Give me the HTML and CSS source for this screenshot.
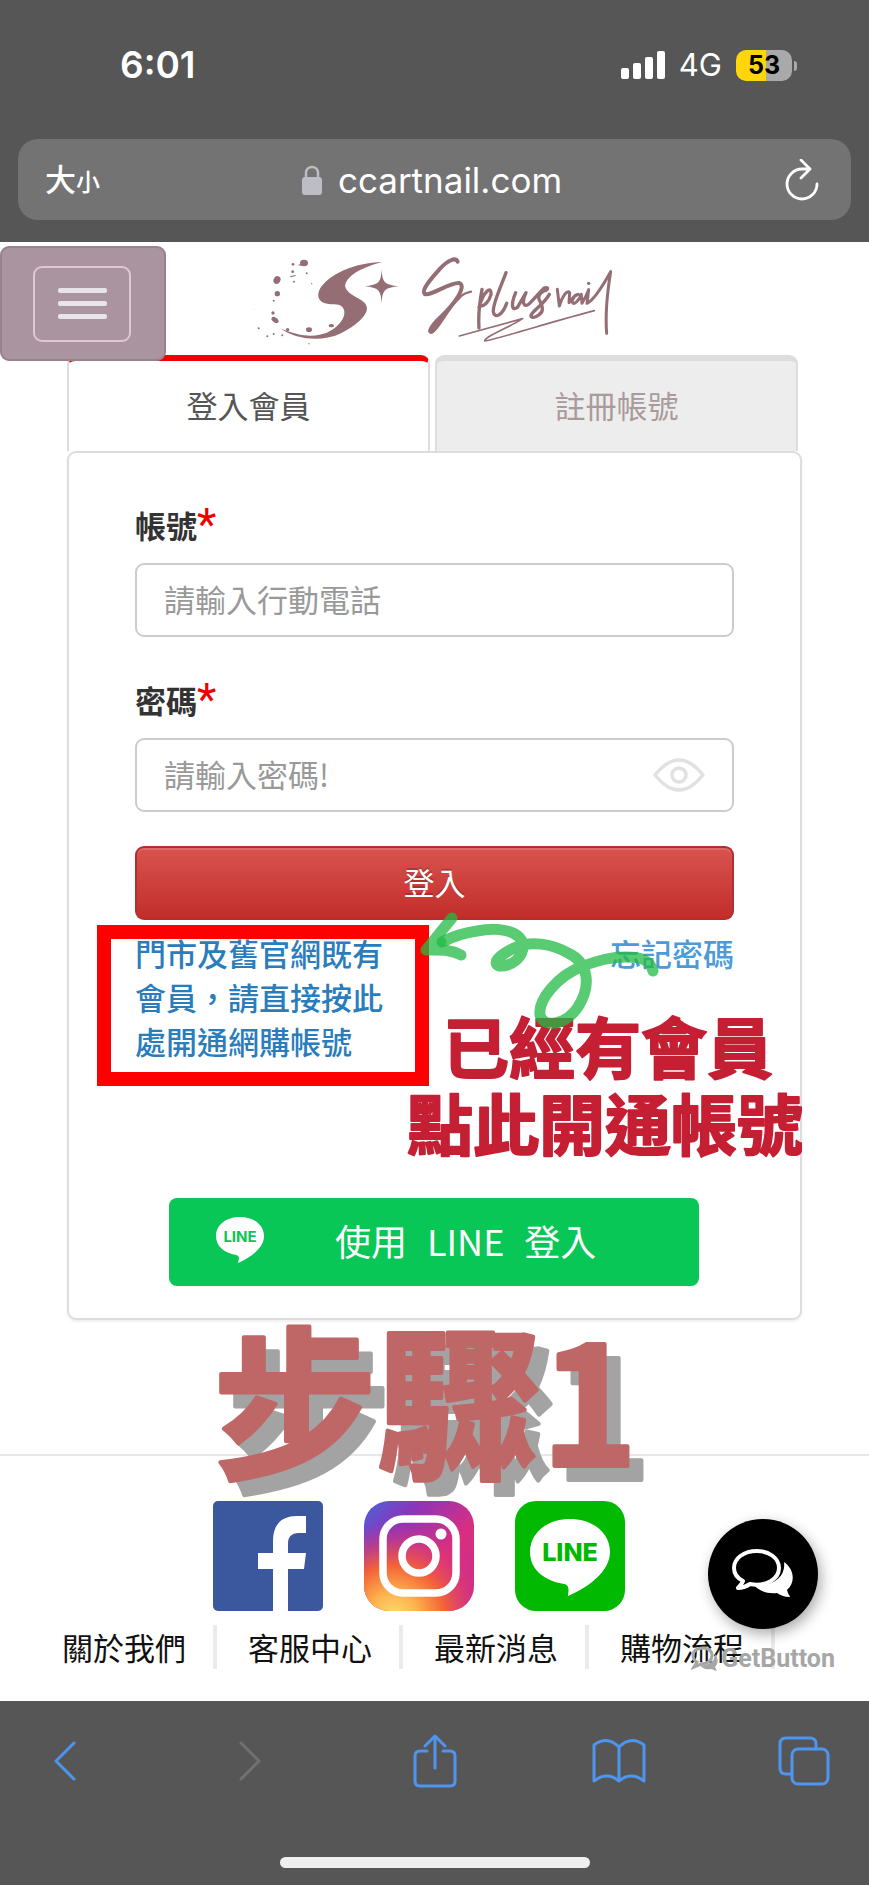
FILE: index.html
```html
<!DOCTYPE html>
<html lang="zh-Hant">
<head>
<meta charset="utf-8">
<meta name="viewport" content="width=device-width, initial-scale=1">
<title>S plus nail</title>
<link rel="stylesheet" href="styles.css">
</head>
<body>
<header class="browser-top">
  <div class="status">
    <span class="time">6:01</span>
    <div class="status-right">
      <svg class="signal" viewBox="0 0 44 28" aria-hidden="true"><g fill="#fff"><rect x="0" y="17" width="8" height="11" rx="2"/><rect x="12" y="12" width="8" height="16" rx="2"/><rect x="24" y="6" width="8" height="22" rx="2"/><rect x="36" y="0" width="8" height="28" rx="2"/></g></svg>
      <span class="network">4G</span>
      <span class="battery">53</span>
    </div>
  </div>
  <div class="address">
    <button class="text-size" type="button" aria-label="文字大小"><span class="big">大</span><span class="small">小</span></button>
    <div class="site">
      <svg class="lock" viewBox="0 0 20 30" aria-hidden="true"><rect y="12" width="20" height="18" rx="3" fill="#bdbdc5"/><path d="M4 13V8c0-8 12-8 12 0v5" fill="none" stroke="#bdbdc5" stroke-width="2.5"/></svg>
      <span>ccartnail.com</span>
    </div>
    <button class="reload-button" type="button" aria-label="重新載入">
      <svg class="reload" viewBox="0 0 34 42" fill="none" stroke="#fff" stroke-width="2.8" stroke-linecap="round" stroke-linejoin="round"><path d="M32 25a15 15 0 1 1-15-15h8M16 1l9 9-9 9"/></svg>
    </button>
  </div>
</header>

<main class="page">
  <button class="menu-button" type="button" aria-label="選單"><span class="menu-frame"><i></i><i></i><i></i></span></button>
  <div class="brand">
    <svg class="logo" viewBox="-18 6 1200 339" role="img" aria-label="S plus nail">
      <g fill="#956d75">
        <path d="M424 66C340 68 262 103 236 148C222 182 246 194 280 193C316 193 318 226 296 250C262 290 200 302 118 265C170 303 250 305 300 280C345 257 378 228 378 205C378 178 328 172 314 145C305 118 350 84 424 66Z"/>
        <path d="M422 88C424 127 430 135 474 139C430 143 424 151 422 192C420 151 414 143 370 139C414 135 420 127 422 88Z"/>
        <ellipse cx="189" cy="69" rx="12" ry="10"/><path d="M170 76l18-9v10z"/>
        <ellipse cx="108" cy="120" rx="10" ry="12" transform="rotate(30 108 120)"/>
        <circle cx="109" cy="161" r="8"/><ellipse cx="102" cy="240" rx="12" ry="7" transform="rotate(35 102 240)"/>
        <circle cx="96" cy="219" r="5"/><ellipse cx="204" cy="269" rx="9" ry="7"/><ellipse cx="271" cy="257" rx="8" ry="5"/>
        <circle cx="140" cy="269" r="5"/><circle cx="156" cy="73" r="4"/><circle cx="155" cy="95" r="4"/><circle cx="159" cy="125" r="3"/><circle cx="197" cy="100" r="3"/><circle cx="98" cy="182" r="3"/><circle cx="53" cy="265" r="3"/><circle cx="79" cy="289" r="3"/><circle cx="98" cy="282" r="3"/><circle cx="124" cy="286" r="3"/><circle cx="212" cy="131" r="2"/><circle cx="204" cy="311" r="2"/><circle cx="40" cy="207" r="1"/><path d="M148 108l16-3v3l-16 4z"/>
        <circle cx="1043" cy="130" r="5"/>
      </g>
      <g fill="none" stroke="#956d75" stroke-linecap="round" stroke-linejoin="round">
        <path stroke-width="12" d="M650 65C643 50 620 62 598 85C568 118 540 150 551 162C566 170 630 125 655 129C678 138 642 190 600 230C570 258 560 280 573 275C590 268 622 198 655 171"/>
        <path stroke-width="7" d="M655 171Q672 158 690 155"/>
        <path stroke-width="10" d="M723 148C715 190 712 235 714 264M714 202C728 152 752 136 750 163C744 188 728 198 720 198M795 98C780 140 755 190 757 215C760 236 782 230 797 190M824 158C808 196 814 216 830 201L855 158C840 190 850 206 866 190C880 176 893 160 908 145C918 140 924 145 916 150C904 152 890 164 894 178C904 195 911 215 893 225C880 236 864 233 872 222C885 205 910 190 925 163"/>
        <path stroke-width="9" d="M949 148L955 198C963 170 978 148 986 158L984 188C990 185 998 163 1012 163C994 168 988 192 1000 190C1012 185 1018 170 1021 163L1023 190C1032 175 1038 162 1043 149L1038 190C1060 180 1095 120 1109 95C1100 150 1092 220 1097 280"/>
        <path stroke-width="5" d="M655 288L845 236C800 265 730 290 731 303C760 300 950 240 1060 212"/>
      </g>
    </svg>
  </div>

  <section class="member">
    <div class="tabs" role="tablist">
      <button class="tab active" role="tab" aria-selected="true" type="button">登入會員</button>
      <button class="tab" role="tab" aria-selected="false" type="button">註冊帳號</button>
    </div>
    <form class="card">
      <div class="field">
        <label for="account">帳號<span class="required">*</span></label>
        <input id="account" type="text" placeholder="請輸入行動電話">
      </div>
      <div class="field">
        <label for="password">密碼<span class="required">*</span></label>
        <div class="password">
          <input id="password" type="password" placeholder="請輸入密碼!">
          <button class="eye" type="button" aria-label="顯示密碼"><svg viewBox="0 0 52 34" fill="none" stroke="#e1e1e1" stroke-width="3.4" stroke-linejoin="round"><path d="M2 17Q26-13 50 17Q26 47 2 17Z"/><circle cx="26" cy="17" r="7"/></svg></button>
        </div>
      </div>
      <button class="submit" type="submit">登入</button>
      <div class="links">
        <a class="activate" href="#activate">門市及舊官網既有會員，請直接按此處開通網購帳號</a>
        <a class="forgot" href="#forgot">忘記密碼</a>
      </div>
      <button class="line-login" type="button">
        <svg class="line-mark" viewBox="0 0 50 48" aria-hidden="true"><path fill="#fff" d="M25 1C11 1 1 9 1 20C1 30 9 37 21 39C25 40 24 42 23 47C36 41 49 32 49 20C49 9 39 1 25 1Z"/><text x="25" y="26" text-anchor="middle">LINE</text></svg>
        <span class="line-label"><span>使用</span><span>LINE</span><span>登入</span></span>
      </button>
      <svg class="notes" viewBox="67 451 735 869">
        <rect x="104" y="932" width="318" height="147" fill="none" stroke="#f00" stroke-width="14"/>
        <text class="note" x="443" y="1073">已經有會員</text>
        <text class="note" x="407" y="1150">點此開通帳號</text>
        <g fill="none" stroke="#22bb44" stroke-opacity=".75" stroke-width="11" stroke-linecap="round" stroke-linejoin="round">
          <path d="M653 971C650 960 641 957 626 957C611 957 600 960 583 966C557 976 538 1000 540 1015C543 1028 565 1026 578 1007C592 985 588 962 568 953C552 944 531 940 514 948C498 956 492 963 499 966C512 967 524 957 523 944C519 930 497 927 477 931C462 933 452 937 442 942"/>
          <path d="M452 918L426 950L441 942M426 950C440 950 450 949 461 955"/>
        </g>
      </svg>
    </form>
  </section>

  <footer class="footer">
    <svg class="step" viewBox="0 0 480 220"><text x="10" y="150">步驟1</text></svg>
    <div class="social">
      <a href="#facebook" aria-label="Facebook"><svg viewBox="0 0 110 110"><rect width="110" height="110" rx="5" fill="#3b579d"/><path fill="#fff" d="M60 110V68H45V52h15V40c0-17 9-25 24-25h9v17h-7c-8 0-11 4-11 11v9h18l-2 16H75v42z"/></svg></a>
      <a href="#instagram" aria-label="Instagram"><svg viewBox="0 0 110 110">
        <defs>
          <linearGradient id="ig-base" x1="0" y1="0" x2="1" y2="1"><stop offset="0" stop-color="#4767d8"/><stop offset=".25" stop-color="#8a35bd"/><stop offset=".6" stop-color="#d92e7f"/><stop offset="1" stop-color="#c62f91"/></linearGradient>
          <radialGradient id="ig-warm" cx=".27" cy="1.05" r=".85"><stop offset="0" stop-color="#ffdb73"/><stop offset=".25" stop-color="#fdb54e"/><stop offset=".55" stop-color="#f36238"/><stop offset="1" stop-color="#d92e7f" stop-opacity="0"/></radialGradient>
        </defs>
        <rect width="110" height="110" rx="25" fill="url(#ig-base)"/><rect width="110" height="110" rx="25" fill="url(#ig-warm)"/>
        <g fill="none" stroke="#fff" stroke-width="7.5"><rect x="19" y="18" width="73" height="74" rx="20"/><circle cx="55" cy="55" r="17"/></g><circle cx="77" cy="33" r="5.5" fill="#fff"/>
      </svg></a>
      <a href="#line" aria-label="LINE"><svg class="line-app" viewBox="0 0 110 110"><rect width="110" height="110" rx="21" fill="#00b900"/><path fill="#fff" d="M55 18C32 18 15 32 15 51C15 69 30 80 49 83C54 84 54 88 53 95C74 86 95 70 95 51C95 32 78 18 55 18Z"/><text x="55" y="60" text-anchor="middle">LINE</text></svg></a>
    </div>
    <nav class="site-nav">
      <a href="#about">關於我們</a><a href="#service">客服中心</a><a href="#news">最新消息</a><a href="#guide">購物流程</a>
    </nav>
    <div class="chat">
      <button class="chat-button" type="button" aria-label="聊天"><svg viewBox="0 0 62 50"><path fill="#fff" d="M52 13C62 20 64 33 55 41C56 45 58 47 58 48C52 48 48 46 45 44C35 45 27 42 22 36C42 38 54 27 52 13Z"/><path fill="#000" stroke="#fff" stroke-width="4" stroke-linejoin="round" d="M25 2C12 2 2 9 2 19C2 25 5 29 11 32C10 35 8 37 6 39C11 39 15 37 18 35C34 38 47 30 47 19C47 9 37 2 25 2Z"/></svg></button>
      <a class="credit" href="#getbutton"><svg viewBox="0 0 28 26"><path fill="#a6a6a6" d="M24 8C28 13 27 18 24 21L26 25L20 23C14 24 11 22 9 19C18 20 24 15 24 8Z"/><path fill="none" stroke="#a6a6a6" stroke-width="3" d="M12 2C6 2 2 5 2 9C2 13 4 15 6 16L3 21L10 18C17 18 21 14 21 9C21 5 17 2 12 2Z"/></svg>GetButton</a>
    </div>
  </footer>
</main>

<footer class="browser-bottom">
  <div class="toolbar">
    <button type="button" aria-label="上一頁"><svg width="24" height="42" viewBox="0 0 24 42"><path d="M21 3L3 21L21 39"/></svg></button>
    <button class="off" type="button" aria-label="下一頁" disabled><svg width="24" height="42" viewBox="0 0 24 42"><path d="M3 3L21 21L3 39"/></svg></button>
    <button type="button" aria-label="分享"><svg width="44" height="54" viewBox="0 0 44 54"><path d="M14 17H7Q2 17 2 22V47Q2 52 7 52H37Q42 52 42 47V22Q42 17 37 17H30M22 34V2M12 12L22 2L32 12"/></svg></button>
    <button type="button" aria-label="書籤"><svg width="54" height="46" viewBox="0 0 54 46"><path d="M27 9Q15-3 2 7V43Q15 33 27 43Q39 33 52 43V7Q39-3 27 9V43"/></svg></button>
    <button type="button" aria-label="分頁"><svg width="52" height="50" viewBox="0 0 52 50"><rect x="14" y="13" width="36" height="35" rx="6"/><path d="M14 38H8Q2 38 2 32V8Q2 2 8 2H32Q38 2 38 8V13"/></svg></button>
  </div>
  <div class="home-bar"></div>
</footer>
</body>
</html>
```
FILE: styles.css
```css
* { box-sizing: border-box; }

body {
  margin: 0;
  background: #fff;
  color: #111;
  font-family: "Noto Sans CJK TC", sans-serif;
  font-size: 31px;
  line-height: 44px;
}

button, input { font: inherit; }
button { margin: 0; padding: 0; border: 0; background: none; color: inherit; }
a { color: inherit; text-decoration: none; }
svg { display: block; }

/* Browser chrome */
.browser-top { padding: 44px 18px 22px; background: #565656; color: #fff; font-family: Inter, "Noto Sans CJK TC", sans-serif; }
.status { display: flex; align-items: center; justify-content: space-between; height: 42px; padding: 0 59px 0 102px; }
.time { font-size: 37px; font-weight: 600; }
.status-right { display: flex; align-items: center; gap: 14px; }
.signal { width: 44px; height: 28px; }
.network { font-size: 31px; }
.battery {
  position: relative;
  width: 56px;
  border-radius: 10px;
  background: linear-gradient(90deg, #ffd60a 53%, #a9a9a9 53%);
  color: #000;
  font-size: 25px;
  font-weight: 700;
  line-height: 31px;
  text-align: center;
}
.battery::after { content: ""; position: absolute; top: 11px; right: -5px; width: 3px; height: 10px; border-radius: 0 3px 3px 0; background: #a9a9a9; }
.address { display: grid; grid-template-columns: 1fr auto 1fr; align-items: center; height: 81px; margin-top: 53px; padding: 0 32px 0 27px; border-radius: 20px; background: #737373; }
.text-size { display: flex; align-items: baseline; font-family: "Noto Sans CJK TC", sans-serif; font-weight: 500; }
.text-size .small { font-size: 24px; }
.site { display: flex; align-items: center; gap: 16px; font-size: 35px; }
.lock { width: 20px; height: 30px; }
.reload-button { justify-self: end; }
.reload { width: 34px; height: 42px; }

.browser-bottom { padding: 29px 38px 18px; background: #565656; }
.toolbar { display: flex; align-items: center; justify-content: space-between; height: 62px; }
.toolbar button { display: grid; place-items: center; width: 54px; height: 62px; }
.toolbar svg { fill: none; stroke: #4e95f0; stroke-width: 3; stroke-linecap: round; stroke-linejoin: round; }
.toolbar .off svg { stroke: #717171; }
.home-bar { width: 310px; height: 11px; margin: 65px auto 0; border-radius: 6px; background: #efefef; }

/* Site header */
.page { position: relative; }
.menu-button { position: absolute; z-index: 2; top: 4px; left: 0; display: grid; place-items: center; width: 166px; height: 115px; padding-right: 2px; border: 2px solid #96838c; border-radius: 9px; background: #a9949f; }
.menu-frame { display: flex; flex-direction: column; align-items: center; justify-content: center; gap: 8px; width: 98px; height: 76px; border: 2px solid #e2c6d4; border-radius: 9px; }
.menu-frame i { width: 49px; height: 5px; border-radius: 2px; background: #e9e4e7; }
.brand { display: flex; justify-content: center; height: 113px; }
.logo { width: 400px; height: 113px; }

/* Login card */
.member { margin: 0 67px; }
.tabs { display: grid; grid-template-columns: 1fr 1fr; gap: 5px; padding-right: 4px; }
.tab { height: 96px; padding-bottom: 2px; border: 2px solid #ddd; border-top: 6px solid #ddd; border-bottom: 0; border-radius: 9px 9px 0 0; background: #ededed; color: #a99a9b; }
.tab.active { border-top-color: #f40000; background: #fff; color: #555; }
.card { position: relative; padding: 50px 66px 32px; border: 2px solid #ddd; border-radius: 9px; box-shadow: 0 2px 3px #0001; }
.field { margin-bottom: 41px; }
.field label { display: flex; height: 44px; margin-bottom: 16px; color: #333; font-weight: 700; }
.required { color: #f00000; font-family: Roboto, sans-serif; font-size: 45px; font-weight: 400; }
.field input { display: block; width: 100%; height: 74px; padding: 0 27px 4px; border: 2px solid #ccc; border-radius: 9px; background: #fff; }
.field input::placeholder { color: #999; opacity: 1; }
.password { position: relative; }
.eye { position: absolute; top: 20px; right: 29px; width: 52px; height: 34px; }
.submit { display: block; width: 100%; height: 74px; margin-top: -7px; padding-bottom: 2px; border: 2px solid #b22f2f; border-bottom-color: #b92c28; border-radius: 9px; background: linear-gradient(#d9534f, #c12e2a); box-shadow: inset 0 2px 0 #fff2; color: #fff; text-shadow: 0 -2px 0 #0003; }
.links { display: flex; align-items: flex-start; justify-content: space-between; margin-top: 11px; color: #2a7dbc; font-weight: 500; }
.activate { width: 248px; }
.forgot { color: #4c9bd8; }
.line-login { display: flex; align-items: center; width: calc(100% - 69px); height: 88px; margin: 135px auto 0 34px; padding: 0 0 4px 46px; border-radius: 8px; background: #08c756; color: #fff; font-size: 36px; }
.line-mark { width: 50px; height: 48px; }
.line-mark text { fill: #08c756; font: 700 15px Inter, sans-serif; }
.line-label { display: flex; gap: 20px; padding-left: 70px; }
.notes { position: absolute; top: -2px; left: -2px; width: calc(100% + 4px); pointer-events: none; }
.note { fill: #c51f34; stroke: #c51f34; stroke-width: 2px; stroke-linejoin: round; font-size: 66px; font-weight: 700; }

/* Site footer */
.footer { position: relative; margin-top: 134px; padding: 45px 0 32px; border-top: 2px solid #e8e8e8; }
.step { position: absolute; top: -140px; left: calc(50% - 232px); width: 480px; height: 220px; overflow: visible; pointer-events: none; }
.step text { fill: #be6766; stroke: #be6766; stroke-width: 4px; stroke-linejoin: round; font-size: 164px; font-weight: 700; filter: drop-shadow(14px 14px 0 #a3a3a3); }
.social { display: flex; justify-content: center; gap: 41px; padding-right: 31px; }
.social svg { width: 110px; height: 110px; }
.line-app text { fill: #00b900; font: 800 25px Inter, sans-serif; }
.site-nav { display: flex; margin: 14px 31px 0; overflow: hidden; }
.site-nav a { flex: none; padding: 0 27px 0 31px; border-right: 4px solid #ebebeb; }
.chat { position: absolute; top: 63px; right: 34px; display: flex; flex-direction: column; align-items: flex-end; }
.chat-button { display: grid; place-items: center; width: 110px; height: 110px; margin-right: 17px; border-radius: 50%; background: #000; box-shadow: 3px 5px 14px #0005; }
.chat-button svg { width: 62px; height: 50px; }
.credit { display: flex; align-items: center; gap: 2px; margin-top: 8px; color: #a6a6a6; font-family: Roboto, sans-serif; font-size: 25px; font-weight: 700; }
.credit svg { width: 28px; height: 26px; }
```
